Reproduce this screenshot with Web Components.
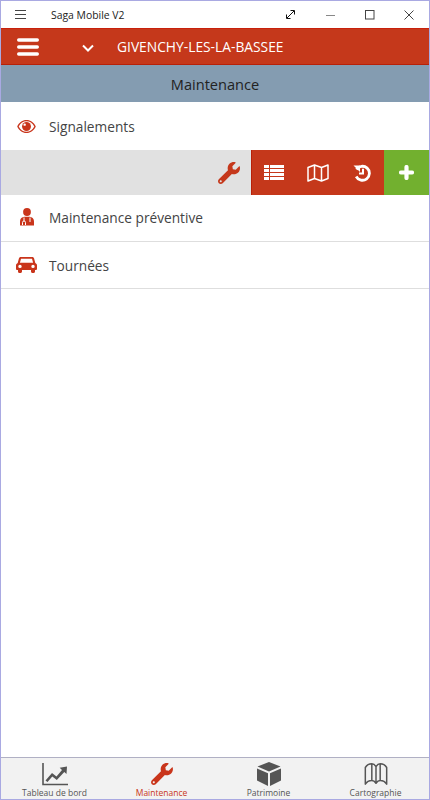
<!DOCTYPE html>
<html>
<head>
<meta charset="utf-8">
<title>Saga Mobile V2</title>
<style>
  html, body{ margin: 0; height: 100%; }
  body{ font-family: "Open Sans", sans-serif; background: #fff; }
</style>
</head>
<body>
<saga-app>
  <saga-titlebar slot="title">Saga Mobile V2</saga-titlebar>
  <saga-header>GIVENCHY-LES-LA-BASSEE</saga-header>
  <saga-section>Maintenance</saga-section>
  <saga-row icon="eye" size="48">Signalements</saga-row>
  <saga-actions></saga-actions>
  <saga-row icon="person" size="46.5" lined>Maintenance préventive</saga-row>
  <saga-row icon="car" size="47.5" lined style="padding-top:1px">Tournées</saga-row>
  <saga-tabs slot="tabs"></saga-tabs>
</saga-app>

<script>
const WRENCH = 'M507.730 109.100c-2.240-9.030-13.540-12.090-20.120-5.510l-74.360 74.360-67.880-11.310-11.310-67.880 74.360-74.360c6.620-6.620 3.430-17.900-5.660-20.160-47.380-11.740-99.550.910-136.580 37.930-39.640 39.640-50.550 97.100-34.050 147.200L18.740 402.760c-24.990 24.990-24.990 65.510 0 90.500 24.990 24.990 65.510 24.990 90.500 0l213.210-213.210c50.120 16.710 107.470 5.680 147.370-34.220 37.070-37.070 49.700-89.320 37.910-136.730zM64 472c-13.250 0-24-10.750-24-24 0-13.260 10.750-24 24-24s24 10.740 24 24c0 13.250-10.750 24-24 24z';

const ICONS = {
  eye: `<svg width="19" height="13" viewBox="0 0 20 14"><path fill="#c9351b" fill-rule="evenodd" d="M10 0C5.600 0 2 2.600 0 7c2 4.400 5.600 7 10 7s8-2.600 10-7c-2-4.400-5.600-7-10-7zM10 1.300c-3.400 0-6.600 2-8.400 5.700 1.800 3.700 5 5.700 8.400 5.700s6.600-2 8.400-5.700C16.600 3.300 13.400 1.300 10 1.300z"/><circle cx="10" cy="7" r="4.800" fill="#c9351b"/><circle cx="8" cy="5" r="1.300" fill="#fff"/></svg>`,
  person: `<svg width="16" height="18" viewBox="0 0 16 18" style="margin-top:-1px"><circle cx="8" cy="4" r="3.900" fill="#c9351b"/><path fill="#c9351b" d="M1 17.500v-4.200C1 10.500 3 9 5.300 8.800h5.400C13 9 15 10.500 15 13.300v4.200z"/><path fill="none" stroke="#fff" stroke-width="1" d="M3.500 17v-2.500a1.500 1.500 0 0 1 3 0V17M5 9.500v3.500M11 9.500v4.500M11 15.500h.01"/></svg>`,
  car: `<svg width="21" height="16" viewBox="0 0 21 16"><path fill="#c9351b" fill-rule="evenodd" d="M4.800 0h11.400c1 0 1.600.6 1.900 1.400L19.300 6c1 .4 1.700 1.300 1.700 2.400V12c0 .5-.4.900-.9.900H19v1.600c0 .8-.6 1.500-1.500 1.500h-1c-.8 0-1.500-.7-1.500-1.500v-1.600H6v1.600C6 15.300 5.300 16 4.500 16h-1C2.600 16 2 15.300 2 14.500v-1.600H.9c-.5 0-.9-.4-.9-.9V8.400C0 7.300.7 6.400 1.700 6l1.200-4.600C3.200.6 3.800 0 4.800 0zM5 1.800 3.900 5.800h13.200L16 1.800zM4 7.700a1.700 1.700 0 1 0 0 3.400 1.700 1.700 0 0 0 0-3.400zm13 0a1.700 1.700 0 1 0 0 3.400 1.700 1.700 0 0 0 0-3.400z"/></svg>`
};

class SagaApp extends HTMLElement{
  constructor(){
    super();
    this.attachShadow({ mode: 'open' });
    this.shadowRoot.innerHTML = `
      <style>
        :host{
          display: flex;
          flex-direction: column;
          box-sizing: border-box;
          height: 800px;
          border: 1px solid #a9a9e2;
          background: #fff;
          overflow: hidden;
        }
        main{ flex: 1; min-height: 0; }
      </style>
      <slot name="title"></slot>
      <main><slot></slot></main>
      <slot name="tabs"></slot>
    `;
  }
}

class SagaTitlebar extends HTMLElement{
  constructor(){
    super();
    this.attachShadow({ mode: 'open' });
    this.shadowRoot.innerHTML = `
      <style>
        :host{
          display: flex;
          align-items: center;
          height: 27px;
          background: #fff;
          font: 10.400px "Open Sans", sans-serif;
          color: #222;
        }
        .burger{ width: 50px; padding-left: 14px; box-sizing: border-box; display: flex; }
        .name{ flex: 1; }
        .ctl{ width: 39.500px; display: flex; justify-content: center; }
        svg{ display: block; }
      </style>
      <div class="burger"><svg width="11" height="9" viewBox="0 0 11 9"><path stroke="#444" fill="none" d="M0 .5h11M0 4.500h11M0 8.500h11"/></svg></div>
      <div class="name"><slot></slot></div>
      <div class="ctl"><svg width="11" height="11" viewBox="0 0 11 11"><path stroke="#111" fill="none" d="M2 9l7-7M5.500 1.500h4v4M1.500 5.500v4h4"/></svg></div>
      <div class="ctl"><svg width="10" height="10" viewBox="0 0 10 10"><path stroke="#888" fill="none" d="M1 5.500h9"/></svg></div>
      <div class="ctl"><svg width="10" height="10" viewBox="0 0 10 10"><rect x=".5" y=".5" width="8.500" height="8.500" stroke="#444" fill="none"/></svg></div>
      <div class="ctl"><svg width="10" height="10" viewBox="0 0 10 10"><path stroke="#444" fill="none" d="M.5.500l9 9M9.500.500l-9 9"/></svg></div>
    `;
  }
}

class SagaHeader extends HTMLElement{
  constructor(){
    super();
    this.attachShadow({ mode: 'open' });
    this.shadowRoot.innerHTML = `
      <style>
        :host{
          display: flex;
          align-items: center;
          box-sizing: border-box;
          height: 37px;
          background: #c5381b;
          border-top: 1px solid #c9200c;
          border-bottom: 1px solid #b82008;
          color: #fff;
          font: 500 13.800px "Open Sans", sans-serif;
        }
        .menu{ width: 80px; padding-left: 16px; box-sizing: border-box; }
        .chev{ width: 36px; }
        svg{ display: block; }
      </style>
      <div class="menu"><svg width="22" height="18" viewBox="0 0 22 18"><path stroke="#fff" stroke-width="3.400" stroke-linecap="round" fill="none" d="M1.700 2h18.600M1.700 9h18.600M1.700 16h18.600"/></svg></div>
      <div class="chev"><svg width="14" height="9" viewBox="0 0 14 9" style="margin-top:4px"><path stroke="#fff" stroke-width="2" fill="none" d="M2 1.500L7 6.500l5-5"/></svg></div>
      <slot></slot>
    `;
  }
}

class SagaSection extends HTMLElement{
  constructor(){
    super();
    this.attachShadow({ mode: 'open' });
    this.shadowRoot.innerHTML = `
      <style>
        :host{
          display: flex;
          align-items: center;
          justify-content: center;
          box-sizing: border-box;
          height: 37px;
          padding-top: 1px;
          background: #849cb1;
          color: #222;
          font: 14.600px "Open Sans", sans-serif;
        }
      </style>
      <slot></slot>
    `;
  }
}

class SagaRow extends HTMLElement{
  connectedCallback(){
    if(this.shadowRoot) return;
    const lined = this.hasAttribute('lined');
    this.attachShadow({ mode: 'open' });
    this.shadowRoot.innerHTML = `
      <style>
        :host{
          display: flex;
          align-items: center;
          box-sizing: border-box;
          height: ${this.getAttribute('size')}px;
          ${lined ? 'border-bottom: 1px solid #dedede;' : ''}
          color: #444;
          font: 13.700px "Open Sans", sans-serif;
        }
        .icon{ width: 48px; display: flex; justify-content: center; padding-left: 3px; box-sizing: border-box; }
        svg{ display: block; }
      </style>
      <div class="icon">${ICONS[this.getAttribute('icon')]}</div>
      <slot></slot>
    `;
  }
}

class SagaActions extends HTMLElement{
  constructor(){
    super();
    this.attachShadow({ mode: 'open' });
    this.shadowRoot.innerHTML = `
      <style>
        :host{
          display: flex;
          height: 45px;
          background: #e1e1e1;
        }
        .tool{ flex: 1; display: flex; justify-content: flex-end; align-items: center; padding-right: 11px; }
        .red{ width: 133px; background: #c5381b; display: flex; border-left: 1px solid #b82008; box-sizing: border-box; }
        .red div{ flex: 1; display: flex; align-items: center; justify-content: center; }
        .add{ width: 45px; background: #72b02f; display: flex; align-items: center; justify-content: center; }
        svg{ display: block; }
      </style>
      <div class="tool"><svg width="22" height="22" viewBox="0 0 512 512"><path fill="#c5381b" d="${WRENCH}"/></svg></div>
      <div class="red">
        <div><svg width="20" height="15" viewBox="0 0 20 15"><path fill="#fff" d="M0 0h5v3H0zM6 0h14v3H6zM0 4h5v3H0zM6 4h14v3H6zM0 8h5v3H0zM6 8h14v3H6zM0 12h5v3H0zM6 12h14v3H6z"/></svg></div>
        <div><svg width="22" height="18" viewBox="0 0 22 18"><path fill="none" stroke="#fff" stroke-width="1.500" stroke-linejoin="round" d="M1 3.500L7.500 1l7 2.500L21 1v13.500L14.500 17l-7-2.500L1 17zM7.500 1v13.500M14.500 3.500V17"/></svg></div>
        <div><svg width="18" height="18" viewBox="0 0 18 18"><path fill="none" stroke="#fff" stroke-width="2.800" d="M3.500 5.500A7 7 0 1 1 3.200 12.500"/><path fill="#fff" d="M.5 1.500h6.500v6.500z"/><path fill="none" stroke="#fff" stroke-width="2" d="M10 4.800v4.700H6"/></svg></div>
      </div>
      <div class="add"><svg width="15" height="15" viewBox="0 0 15 15"><path stroke="#fff" stroke-width="4.200" stroke-linecap="round" fill="none" d="M7.500 2v11M2 7.500h11"/></svg></div>
    `;
  }
}

class SagaTabs extends HTMLElement{
  constructor(){
    super();
    this.attachShadow({ mode: 'open' });
    const tab = (label, icon, on) => `
      <div class="tab${on ? ' on' : ''}">${icon}<span>${label}</span></div>`;
    this.shadowRoot.innerHTML = `
      <style>
        :host{
          display: flex;
          box-sizing: border-box;
          height: 42px;
          background: #f2f2f2;
          border-top: 1px solid #b0b0c4;
          color: #555;
          font: 8.500px "Open Sans", sans-serif;
        }
        .tab{ flex: 1; display: flex; flex-direction: column; align-items: center; padding-top: 3px; }
        .tab.on{ color: #c9351b; }
        svg{ display: block; width: 26px; height: 26px; }
        span{ line-height: 12px; }
      </style>
      ${tab('Tableau de bord', `<svg viewBox="0 0 26 26"><path fill="none" stroke="#555" stroke-width="1.600" d="M1 2v21.500h25"/><path fill="#555" d="M3.500 19.500L10 12l4.500 3.500L20 9l-2.300-2.200L25 5.500 24.500 13 22.300 11l-7.500 8-4.500-3.500-4.800 5.500z"/></svg>`)}
      ${tab('Maintenance', `<svg viewBox="-48 -48 608 608"><path fill="#c9351b" d="${WRENCH}"/></svg>`, true)}
      ${tab('Patrimoine', `<svg viewBox="0 0 26 26"><path fill="#555" d="M13 1l11.500 4.500L13 10.500 1.500 5.500zM1 7.500l11 4.800V25L1 19.500zM25 7.500v12L14 25V12.300z"/></svg>`)}
      ${tab('Cartographie', `<svg viewBox="-1 -1 28 28"><path fill="none" stroke="#555" stroke-width="1.600" stroke-linejoin="round" d="M1.500 6C3 3.500 6 2 8.500 2v18c-2.500 0-5.500 1.500-7 4zM8.500 2c2 0 3.500 1.500 4.500 3 1-1.500 2.500-3 4.500-3v18c-2 0-3.500 1.500-4.500 3-1-1.500-2.500-3-4.500-3zM13 5v18M17.500 2c2.500 0 5.500 1.500 7 4v18c-1.500-2.500-4.500-4-7-4z"/></svg>`)}
    `;
  }
}

customElements.define('saga-app', SagaApp);
customElements.define('saga-titlebar', SagaTitlebar);
customElements.define('saga-header', SagaHeader);
customElements.define('saga-section', SagaSection);
customElements.define('saga-row', SagaRow);
customElements.define('saga-actions', SagaActions);
customElements.define('saga-tabs', SagaTabs);
</script>
</body>
</html>
